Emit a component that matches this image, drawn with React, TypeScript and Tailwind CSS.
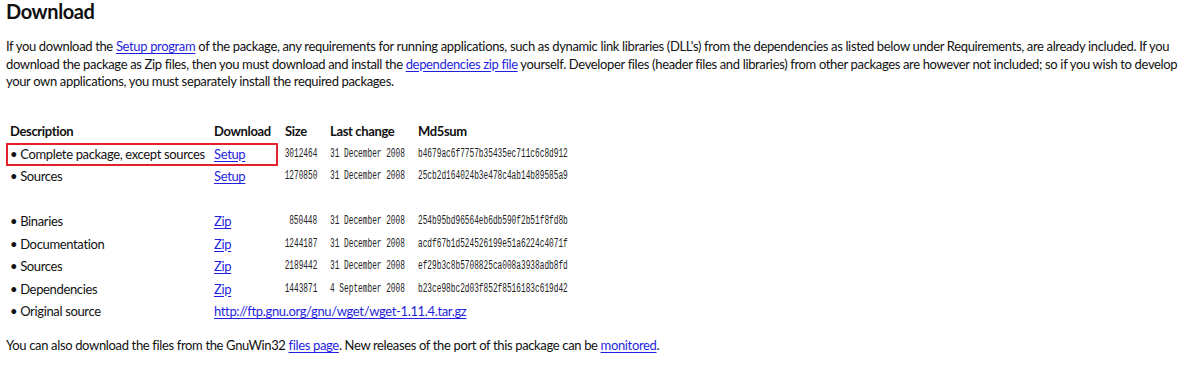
import React from "react"

type Row = {
  desc: string
  link?: string
  size?: string
  date?: string
  md5?: string
  url?: string
  highlight?: boolean
}

const rows: (Row | null)[] = [
  { desc: "Complete package, except sources", link: "Setup", size: "3012464", date: "31 December 2008", md5: "b4679ac6f7757b35435ec711c6c8d912", highlight: true },
  { desc: "Sources", link: "Setup", size: "1270850", date: "31 December 2008", md5: "25cb2d164024b3e478c4ab14b89585a9" },
  null,
  { desc: "Binaries", link: "Zip", size: "850448", date: "31 December 2008", md5: "254b95bd96564eb6db590f2b51f8fd8b" },
  { desc: "Documentation", link: "Zip", size: "1244187", date: "31 December 2008", md5: "acdf67b1d524526199e51a6224c4071f" },
  { desc: "Sources", link: "Zip", size: "2189442", date: "31 December 2008", md5: "ef29b3c8b5708825ca008a3938adb8fd" },
  { desc: "Dependencies", link: "Zip", size: "1443871", date: "4 September 2008", md5: "b23ce98bc2d03f852f8516183c619d42" },
  { desc: "Original source", url: "http://ftp.gnu.org/gnu/wget/wget-1.11.4.tar.gz" },
]

const A = ({ children }: { children: React.ReactNode }) => (
  <a href="#" className="text-[#1f1fe0] underline underline-offset-2">{children}</a>
)

const mono = "font-['Liberation_Mono',monospace] text-[12px] tracking-normal text-[#222]"

export default function App() {
  return (
    <div className="w-[1200px] h-[370px] bg-white text-[#111] font-['Lato',sans-serif] text-[13px] tracking-[-0.35px] leading-[17.5px] px-[6px] overflow-hidden">
      <h1 className="text-[20px] leading-[22px] font-bold tracking-[-0.4px]">Download</h1>

      <p className="mt-4 pr-1">
        If you download the <A>Setup program</A> of the package, any requirements for running applications, such as dynamic link libraries (DLL's) from the dependencies as listed below under Requirements, are already included. If you download the package as Zip files, then you must download and install the <A>dependencies zip file</A> yourself. Developer files (header files and libraries) from other packages are however not included; so if you wish to develop your own applications, you must separately install the required packages.
      </p>

      <div className="mt-[30px] flex flex-col">
        <div className="flex h-[22.5px] items-center font-bold">
          <div className="w-[204px] pl-1">Description</div>
          <div className="w-[68px] pl-1">Download</div>
          <div className="w-[43px] pl-[7px]">Size</div>
          <div className="w-[93px] pl-[9px]">Last change</div>
          <div className="pl-1">Md5sum</div>
        </div>

        {rows.map((r, i) =>
          r === null ? (
            <div key={i} className="h-[22.5px]" />
          ) : (
            <div key={i} className="flex h-[22.5px] items-center">
              <div className={`flex h-full w-[272px] items-center ${r.highlight ? "ring-2 ring-inset ring-[#e0242b]" : ""}`}>
                <div className="w-[204px] pl-1 whitespace-nowrap">• {r.desc}</div>
                {r.url ? null : (
                  <div className="w-[68px] pl-1">
                    <A>{r.link}</A>
                  </div>
                )}
              </div>
              {r.url ? (
                <div className="-ml-[64px] whitespace-nowrap">
                  <A>{r.url}</A>
                </div>
              ) : (
                <>
                  <div className={`flex w-[43px] shrink-0 justify-end pr-1 ${mono}`}>
                    <span className="inline-block shrink-0 origin-right scale-x-[0.65]">{r.size}</span>
                  </div>
                  <div className={`w-[93px] shrink-0 pl-[9px] whitespace-nowrap ${mono}`}>
                    <span className="inline-block origin-left scale-x-[0.65]">{r.date}</span>
                  </div>
                  <div className={`pl-1 whitespace-nowrap ${mono}`}>
                    <span className="inline-block origin-left scale-x-[0.65]">{r.md5}</span>
                  </div>
                </>
              )}
            </div>
          )
        )}
      </div>

      <p className="mt-[14px]">
        You can also download the files from the GnuWin32 <A>files page</A>. New releases of the port of this package can be <A>monitored</A>.
      </p>
    </div>
  )
}
